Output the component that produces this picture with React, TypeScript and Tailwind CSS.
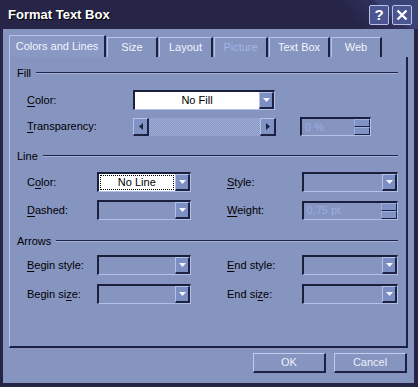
import React from 'react';

const font = { fontFamily: '"Liberation Sans", Arial, sans-serif' };

function Mn({ text, at }: { text: string; at: number }) {
  return (
    <>
      {text.slice(0, at)}
      <span className="underline underline-offset-2">{text[at]}</span>
      {text.slice(at + 1)}
    </>
  );
}

function Arrow() {
  return (
    <svg width="7" height="4" viewBox="0 0 7 4">
      <path d="M0 0h7L3.5 4z" fill="#f4f6ff" />
    </svg>
  );
}

function DropBtn() {
  return (
    <div className="w-[15px] h-full flex items-center justify-center bg-[#7d8ec2] border-t border-l border-[#b4c2ea] border-r-2 border-b-2 border-r-[#1d2244] border-b-[#1d2244]">
      <Arrow />
    </div>
  );
}

function Combo({ w, value, white, focus }: { w: string; value?: string; white?: boolean; focus?: boolean }) {
  return (
    <div className={`${w} h-[20px] flex border-t-2 border-l-2 border-[#1b1f3e] border-b border-r border-b-[#b2c0e8] border-r-[#b2c0e8] ${white ? 'bg-white' : 'bg-[#8694c0]'}`}>
      <div className="flex-1 flex items-center justify-center text-[11px] text-black px-[2px]">
        {value && (
          <span className={focus ? 'outline outline-1 outline-dotted outline-black w-full text-center leading-[13px]' : ''}>{value}</span>
        )}
      </div>
      <DropBtn />
    </div>
  );
}

function Spinner({ w, value }: { w: string; value: string }) {
  return (
    <div className={`${w} h-[19px] flex border-t-2 border-l-2 border-[#1b1f3e] border-b border-r border-b-[#b2c0e8] border-r-[#b2c0e8]`}>
      <div className="flex-1 flex items-center pl-[3px] text-[11px] text-[#9aaee0]">{value}</div>
      <div className="w-[16px] flex flex-col">
        <div className="flex-1 bg-[#8192c4] border-t border-l border-[#9eaede] border-r border-b border-r-[#1d2244] border-b-[#1d2244]" />
        <div className="flex-1 bg-[#8192c4] border-t border-l border-[#9eaede] border-r border-b border-r-[#1d2244] border-b-[#1d2244]" />
      </div>
    </div>
  );
}

function Header({ title }: { title: string }) {
  return (
    <div className="flex items-center h-[14px] pl-[7px]">
      <span className="text-[11px] text-black leading-none">{title}</span>
      <div className="flex-1 ml-[5px] h-[2px] border-t border-[#1f2548] border-b border-b-[#a2b0da]" />
    </div>
  );
}

function Row({ children, mt }: { children: React.ReactNode; mt: string }) {
  return <div className={`flex items-center pl-[17px] ${mt}`}>{children}</div>;
}

function Btn({ label }: { label: string }) {
  return (
    <div className="w-[73px] h-[20px] flex items-center justify-center text-[11px] text-[#eef0fa] bg-[#8694c0] border-t border-l border-[#c0ccf0] border-r-2 border-b-2 border-r-[#1d2244] border-b-[#1d2244]">
      {label}
    </div>
  );
}

const tabs = [
  { label: 'Colors and Lines', w: 'w-[97px]' },
  { label: 'Size', w: 'w-[51px]' },
  { label: 'Layout', w: 'w-[54px]' },
  { label: 'Picture', w: 'w-[54px]', disabled: true },
  { label: 'Text Box', w: 'w-[61px]' },
  { label: 'Web', w: 'w-[51px]' },
];

export default function App() {
  return (
    <div className="w-[418px] h-[387px] bg-[#262548] flex flex-col overflow-hidden" style={font}>
      {/* Title bar */}
      <div className="h-[29px] flex items-center justify-between pl-[8px] pr-[6px] bg-[radial-gradient(circle_at_450px_-60px,#3a4276_0,#3a4276_95px,#30305c_98px,transparent_125px)]">
        <span className="text-[13px] font-bold text-white [text-shadow:1px_1px_0_#000]">Format Text Box</span>
        <div className="flex gap-[3px]">
          <div className="w-[20px] h-[20px] rounded-[2px] border border-[#b8c2e8] bg-[#4a5592] flex items-center justify-center text-white font-bold text-[15px] leading-none">?</div>
          <div className="w-[20px] h-[20px] rounded-[2px] border border-[#b8c2e8] bg-[#4a5592] flex items-center justify-center">
            <svg width="12" height="12" viewBox="0 0 12 12">
              <path d="M1.5 1.5l9 9M10.5 1.5l-9 9" stroke="#fff" strokeWidth="2.4" />
            </svg>
          </div>
        </div>
      </div>

      {/* Body */}
      <div className="flex-1 ml-[3px] mr-[4px] mb-[4px] bg-[#8694c0] pl-[6px] pr-[2px] pt-[6px] flex flex-col">
        <div className="flex items-end h-[22px]">
          {tabs.map((t, i) => (
            <div
              key={t.label}
              className={`${t.w} ${i === 0 ? 'h-[22px] bg-[#8a98c4]' : 'h-[20px] ml-[1px]'} flex items-center justify-center text-[11px] border-t border-l border-[#b6c4ec] border-r-2 border-r-[#1d2244] ${t.disabled ? 'text-[#a4b6e6]' : 'text-[#f2f4ff]'}`}
            >
              {t.label}
            </div>
          ))}
        </div>

        {/* Panel */}
        <div className="w-[399px] h-[291px] border-l border-[#b6c4ec] border-r-2 border-b-2 border-r-[#1d2244] border-b-[#1d2244] pr-[8px] pt-[9px] flex flex-col">
          <Header title="Fill" />
          <Row mt="mt-[10px]">
            <span className="w-[106px] text-[11px] text-black"><Mn text="Color:" at={0} /></span>
            <Combo w="w-[142px]" value="No Fill" white />
          </Row>
          <Row mt="mt-[7px]">
            <span className="w-[106px] text-[11px] text-black"><Mn text="Transparency:" at={0} /></span>
            <div className="w-[143px] h-[18px] flex">
              <div className="w-[16px] h-full flex items-center justify-center bg-[#8192c4] border-t border-l border-[#b4c2ea] border-r-2 border-b-2 border-r-[#1d2244] border-b-[#1d2244]">
                <svg width="4" height="7" viewBox="0 0 4 7"><path d="M4 0v7L0 3.5z" fill="#1d2244" /></svg>
              </div>
              <div className="flex-1 bg-[repeating-conic-gradient(#a2b0da_0_25%,#8694c0_0_50%)] bg-[length:2px_2px]" />
              <div className="w-[16px] h-full flex items-center justify-center bg-[#8192c4] border-t border-l border-[#b4c2ea] border-r-2 border-b-2 border-r-[#1d2244] border-b-[#1d2244]">
                <svg width="4" height="7" viewBox="0 0 4 7"><path d="M0 0v7L4 3.5z" fill="#1d2244" /></svg>
              </div>
            </div>
            <div className="ml-[24px]">
              <Spinner w="w-[71px]" value="0 %" />
            </div>
          </Row>

          <div className="mt-[13px]">
            <Header title="Line" />
          </div>
          <Row mt="mt-[9px]">
            <span className="w-[70px] text-[11px] text-black"><Mn text="Color:" at={1} /></span>
            <Combo w="w-[95px]" value="No Line" white focus />
            <span className="ml-[36px] w-[75px] text-[11px] text-black"><Mn text="Style:" at={0} /></span>
            <Combo w="w-[97px]" />
          </Row>
          <Row mt="mt-[8px]">
            <span className="w-[70px] text-[11px] text-black"><Mn text="Dashed:" at={0} /></span>
            <Combo w="w-[95px]" />
            <span className="ml-[36px] w-[75px] text-[11px] text-black"><Mn text="Weight:" at={0} /></span>
            <Spinner w="w-[97px]" value="0,75 pt" />
          </Row>

          <div className="mt-[14px]">
            <Header title="Arrows" />
          </div>
          <Row mt="mt-[7px]">
            <span className="w-[70px] text-[11px] text-black"><Mn text="Begin style:" at={0} /></span>
            <Combo w="w-[95px]" />
            <span className="ml-[36px] w-[75px] text-[11px] text-black"><Mn text="End style:" at={0} /></span>
            <Combo w="w-[97px]" />
          </Row>
          <Row mt="mt-[9px]">
            <span className="w-[70px] text-[11px] text-black"><Mn text="Begin size:" at={8} /></span>
            <Combo w="w-[95px]" />
            <span className="ml-[36px] w-[75px] text-[11px] text-black"><Mn text="End size:" at={6} /></span>
            <Combo w="w-[97px]" />
          </Row>
        </div>

        <div className="flex justify-end gap-[8px] mt-[5px] pr-[5px]">
          <Btn label="OK" />
          <Btn label="Cancel" />
        </div>
      </div>
    </div>
  );
}
